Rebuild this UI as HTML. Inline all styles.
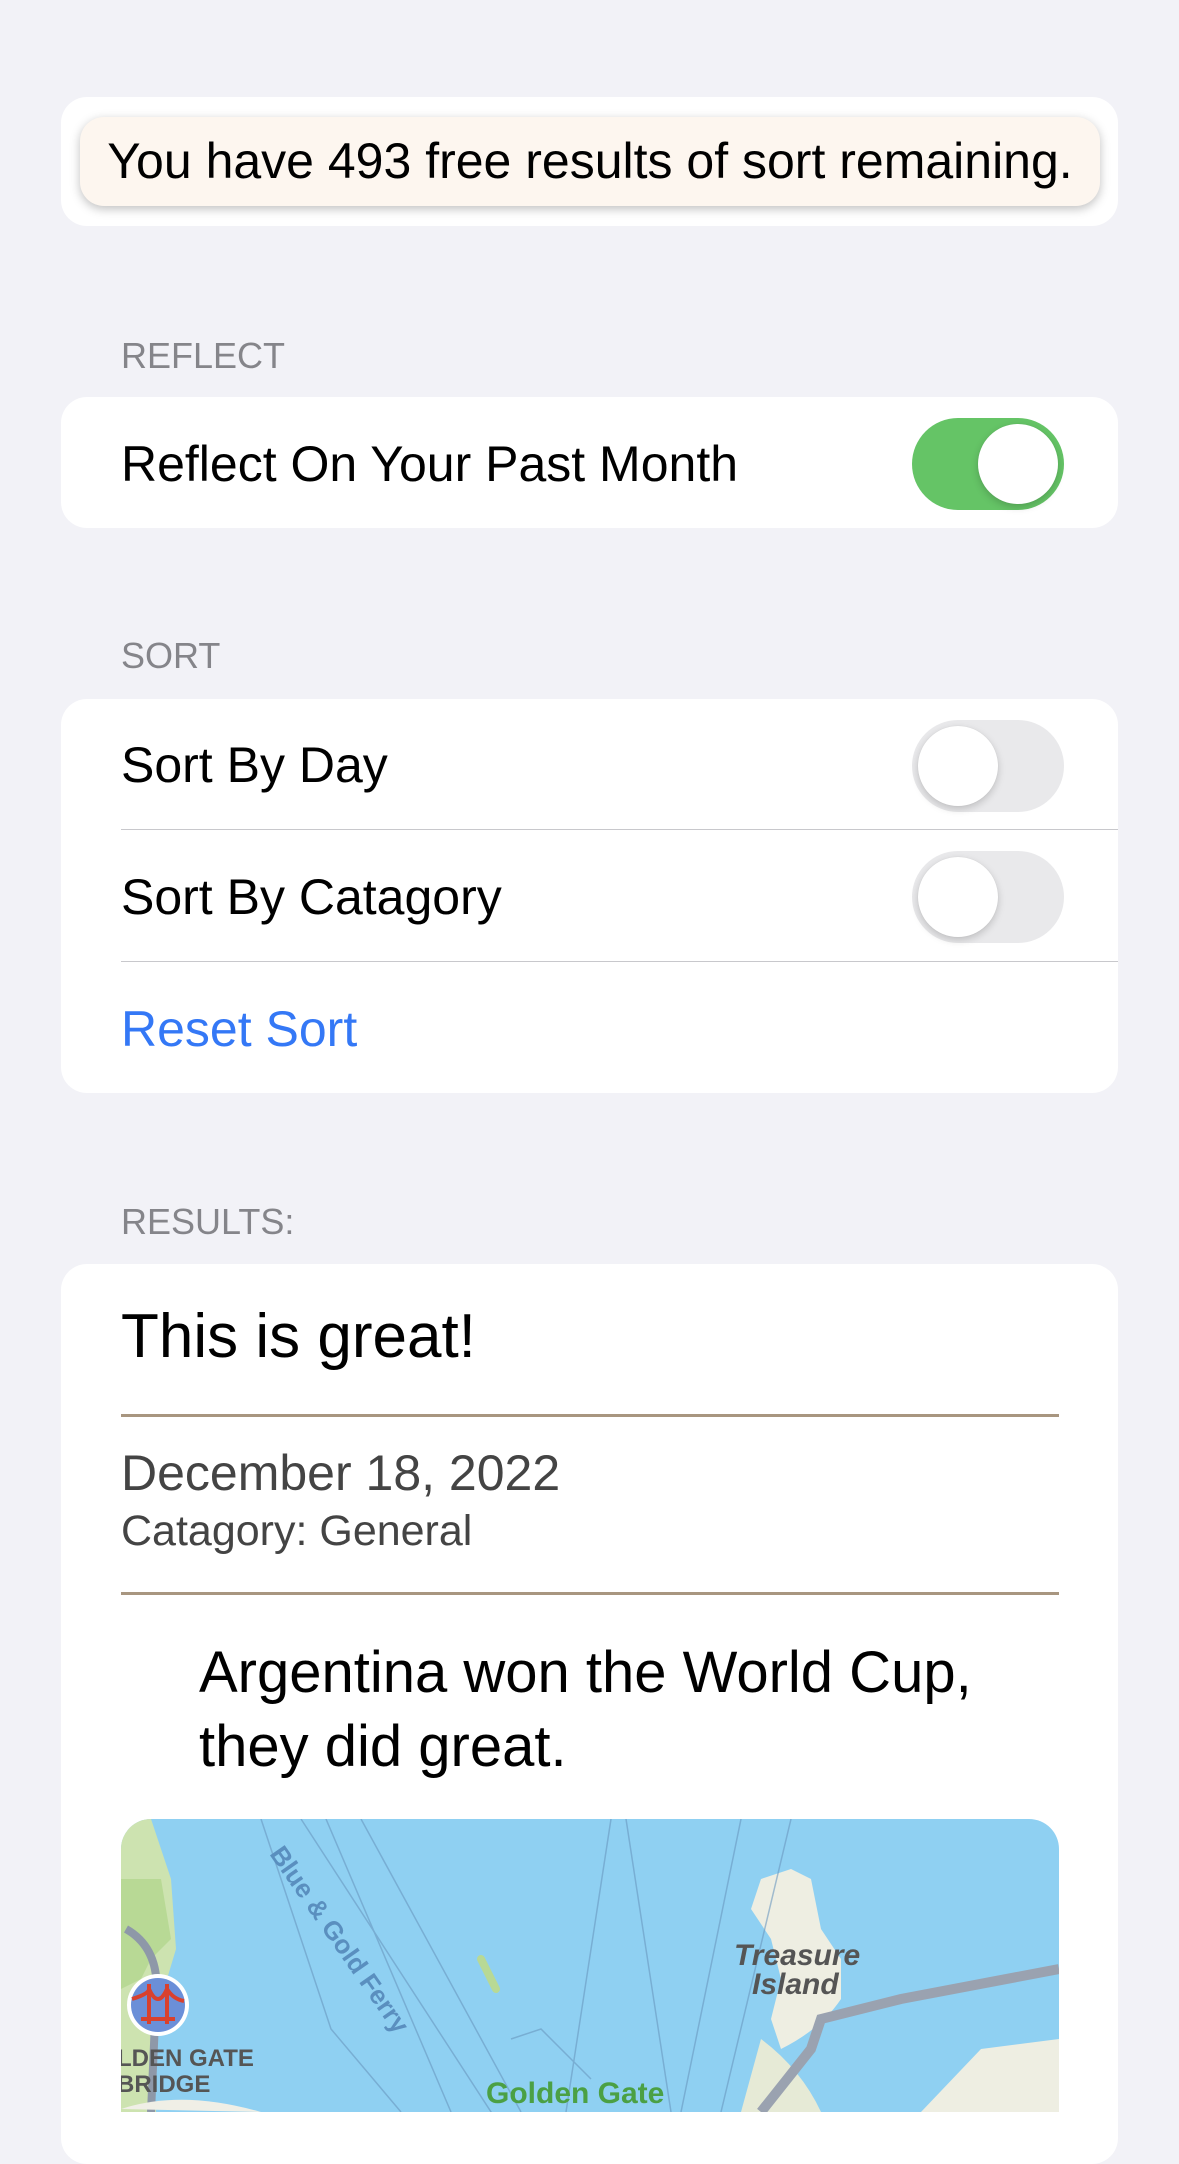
<!DOCTYPE html>
<html><head><meta charset="utf-8"><style>
*{margin:0;padding:0;box-sizing:border-box}
body{width:1179px;height:2112px;background:#f2f2f7;font-family:"Liberation Sans",sans-serif;position:relative;overflow:hidden}
.a{position:absolute;white-space:nowrap}
.card{position:absolute;left:61px;width:1057px;background:#fff;border-radius:26px}
.lbl{position:absolute;left:121px;font-size:36px;color:#85858a;line-height:40px}
.row{position:absolute;left:121px;font-size:50px;color:#000;line-height:56px}
.tg{position:absolute;left:912px;width:152px;height:92px;border-radius:46px;background:#e9e9eb}
.tg::after{content:"";position:absolute;top:6px;width:80px;height:80px;border-radius:50%;background:#fff;box-shadow:0 3px 8px rgba(0,0,0,.18),0 0 1px rgba(0,0,0,.1)}
.off::after{left:6px}
.on{background:#65c466}.on::after{left:66px}
.sep{position:absolute;left:121px;right:61px;height:1px;background:#c8c8cc}
.br{position:absolute;left:121px;width:938px;height:3px;background:#a89680}
</style></head><body>
<div class="card" style="top:97px;height:129px"></div>
<div class="a" style="left:80px;top:117px;width:1020px;height:89px;border-radius:24px;background:#fdf6ef;box-shadow:0 3px 10px rgba(0,0,0,.25)"></div>
<div class="a" style="left:80px;top:117px;width:1020px;height:89px;line-height:89px;text-align:center;font-size:50px;color:#000">You have 493 free results of sort remaining.</div>

<div class="lbl" style="top:336px">REFLECT</div>
<div class="card" style="top:397px;height:131px"></div>
<div class="row" style="top:436px">Reflect On Your Past Month</div>
<div class="tg on" style="top:418px"></div>

<div class="lbl" style="top:636px">SORT</div>
<div class="card" style="top:699px;height:394px"></div>
<div class="row" style="top:737px">Sort By Day</div>
<div class="tg off" style="top:720px"></div>
<div class="sep" style="top:829px"></div>
<div class="row" style="top:869px">Sort By Catagory</div>
<div class="tg off" style="top:851px"></div>
<div class="sep" style="top:961px"></div>
<div class="row" style="top:1001px;color:#3478f6">Reset Sort</div>

<div class="lbl" style="top:1202px">RESULTS:</div>
<div class="card" style="top:1264px;height:900px"></div>
<div class="a" style="left:121px;top:1302px;font-size:62px;line-height:70px">This is great!</div>
<div class="br" style="top:1414px"></div>
<div class="a" style="left:121px;top:1448px;font-size:50px;line-height:50px;color:#444;font-weight:300">December 18, 2022</div>
<div class="a" style="left:121px;top:1510px;font-size:43px;line-height:42px;color:#444">Catagory: General</div>
<div class="br" style="top:1592px"></div>
<div class="a" style="left:199px;top:1636px;font-size:58px;line-height:74px;color:#000">Argentina won the World Cup,<br>they did great.</div>

<svg class="a" style="left:121px;top:1819px" width="938" height="293" viewBox="0 0 938 293">
<defs><clipPath id="c"><path d="M30 0H908A30 30 0 0 1 938 30V293H0V30A30 30 0 0 1 30 0Z"/></clipPath></defs>
<g clip-path="url(#c)">
<rect width="938" height="293" fill="#8fd0f2"/>
<path d="M0 0H30L50 60L55 130L40 180L30 230L35 293H0Z" fill="#cde3b0"/>
<path d="M0 60L40 60L50 120L30 140L20 160L0 170Z" fill="#b8d995"/>
<path d="M5 110Q40 130 35 180L30 293" stroke="#8e98a8" stroke-width="8" fill="none"/>
<path d="M0 290Q60 270 140 293Z" fill="#f0efe6"/>
<path d="M660 230Q700 210 720 180L720 140L700 110L690 60L670 50L640 60L630 90L650 120L660 160L650 200Z" fill="#eeeee2"/>
<path d="M640 220Q680 250 700 293L620 293Z" fill="#e6ead6"/>
<path d="M800 293L860 230L938 220V293Z" fill="#eeeee2"/>
<path d="M640 293L690 230L700 200L780 180L938 150" stroke="#9aa2b0" stroke-width="10" fill="none"/>
<path d="M360 140Q370 160 375 170" stroke="#b8d995" stroke-width="8" stroke-linecap="round"/>
<g stroke="#6a98c0" stroke-width="1.5" fill="none" opacity=".6">
<path d="M180 0L420 370"/><path d="M205 0L330 293"/><path d="M240 0L400 293"/>
<path d="M490 0L445 293"/><path d="M505 0L550 293"/><path d="M620 0L560 293"/>
<path d="M670 0L600 293"/><path d="M140 0L210 210L280 293"/><path d="M390 220L420 210L470 260"/>
</g>
<circle cx="37" cy="186" r="31" fill="#fff"/>
<circle cx="37" cy="186" r="27" fill="#6b8fd8"/>
<path d="M20 200L54 200M28 165V205M46 165V205M28 170Q37 190 46 170M11 180Q28 175 28 170M46 170Q52 180 63 182" stroke="#d9412e" stroke-width="4" fill="none"/>
<text x="-4" y="247" font-family="Liberation Sans" font-weight="bold" font-size="24" fill="#555">LDEN GATE</text>
<text x="-4" y="273" font-family="Liberation Sans" font-weight="bold" font-size="24" fill="#555">BRIDGE</text>
<text transform="translate(148 35) rotate(55)" font-family="Liberation Sans" font-weight="bold" font-size="26" fill="#5a8fbf">Blue &amp; Gold Ferry</text>
<text x="613" y="146" font-family="Liberation Sans" font-style="italic" font-weight="bold" font-size="30" fill="#555">Treasure</text>
<text x="631" y="175" font-family="Liberation Sans" font-style="italic" font-weight="bold" font-size="30" fill="#555">Island</text>
<text x="365" y="284" font-family="Liberation Sans" font-weight="bold" font-size="30" fill="#4ba044">Golden Gate</text>
</g></svg>
</body></html>
